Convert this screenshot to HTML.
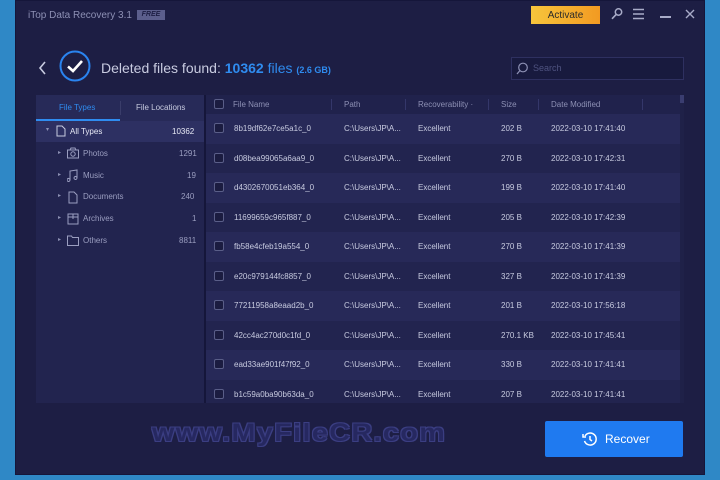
<!DOCTYPE html>
<html><head><meta charset="utf-8"><style>
*{margin:0;padding:0;box-sizing:border-box}
body{width:720px;height:480px;background:#2f88c6;font-family:"Liberation Sans",sans-serif;overflow:hidden;position:relative}
.win{position:absolute;left:15px;top:0;width:690px;height:475px;background:#1d1e44;border:1px solid #15163a}
.a{position:absolute}
.t{color:#c8cbe0;font-size:8px;white-space:nowrap}
.left{position:absolute;left:36px;top:95px;width:168px;height:308px;background:#22244f}
.tbl{position:absolute;left:206px;top:95px;width:478px;height:308px;background:#22244f;overflow:hidden}
.row{position:absolute;left:0;width:474px;height:29.5px}
.cb{position:absolute;width:10px;height:10px;border:1px solid #5a5e88;border-radius:2px;background:#1b1c40}
</style></head><body>
<div class="win"></div>
<div class="a" style="left:28px;top:10px;color:#8d90b4;font-size:10px">iTop Data Recovery 3.1</div>
<div class="a" style="left:137px;top:10px;width:28px;height:10px;background:#5b5e8c;color:#1d1e44;font-size:7px;font-weight:bold;font-style:italic;text-align:center;line-height:10px">FREE</div>
<div class="a" style="left:531px;top:6px;width:69px;height:18px;background:linear-gradient(90deg,#f7c53c,#f29a22);color:#2a2a2a;font-size:10px;display:flex;align-items:center;justify-content:center">Activate</div>
<svg class="a" style="left:610px;top:7px" width="14" height="14" viewBox="0 0 14 14"><circle cx="8.5" cy="5" r="3.2" fill="none" stroke="#a8abc8" stroke-width="1.5"/><path d="M6.3 7.3L2 11.8" stroke="#a8abc8" stroke-width="1.6"/></svg>
<svg class="a" style="left:633px;top:8px" width="12" height="12"><path d="M0 1.5h11M0 6h11M0 10.5h11" stroke="#a8abc8" stroke-width="1.4"/></svg>
<div class="a" style="left:660px;top:16px;width:11px;height:1.5px;background:#a8abc8"></div>
<svg class="a" style="left:685px;top:9px" width="10" height="10"><path d="M1 1L9 9M9 1L1 9" stroke="#a8abc8" stroke-width="1.4"/></svg>
<svg class="a" style="left:38px;top:60px" width="10" height="16"><path d="M7 2L2 8L7 14" fill="none" stroke="#c8cbe0" stroke-width="1.6"/></svg>
<svg class="a" style="left:59px;top:50px" width="32" height="32"><circle cx="16" cy="16" r="14.5" fill="none" stroke="#2a84f0" stroke-width="2"/><path d="M9 16.5L14 21L23 11" fill="none" stroke="#fff" stroke-width="2.6"/></svg>
<div class="a" style="left:101px;top:60px;font-size:14px;color:#c8cbe0">Deleted files found: <b style="color:#2f8cf0">10362</b> <span style="color:#2f8cf0">files</span> <b style="color:#2f8cf0;font-size:9px">(2.6 GB)</b></div>
<div class="a" style="left:511px;top:57px;width:173px;height:23px;background:#181a3e;border:1px solid #2e3060"></div>
<svg class="a" style="left:516px;top:62px" width="13" height="13"><circle cx="7" cy="5.5" r="4.3" fill="none" stroke="#8d90b4" stroke-width="1.2"/><path d="M4 8.5L1 12" stroke="#8d90b4" stroke-width="1.3"/></svg>
<div class="a" style="left:533px;top:63px;font-size:9px;color:#4f5380">Search</div>

<div class="left">
<div class="a" style="left:0;top:0;width:168px;height:26px;background:#272a58"></div>
<div class="a t" style="left:23px;top:8px;color:#2f8cf0">File Types</div>
<div class="a t" style="left:100px;top:8px">File Locations</div>
<div class="a" style="left:84px;top:6px;width:1px;height:14px;background:#3a3d6a"></div>
<div class="a" style="left:0;top:24px;width:84px;height:2px;background:#2f8cf0"></div>
<div class="a" style="left:0;top:26px;width:168px;height:21px;background:#2d3062"></div>
<div class="a t" style="left:10px;top:31px;font-size:6px;color:#8d90b4">▾</div>
<svg class="a" style="left:20px;top:30px" width="10" height="12"><path d="M1 1h5l3 3v7H1z" fill="none" stroke="#c8cbe0" stroke-width="1"/></svg>
<div class="a t" style="left:34px;top:32px;color:#e8eaf6">All Types</div>
<div class="a t" style="left:136px;top:32px;color:#e8eaf6">10362</div>
<div class="a t" style="left:22px;top:54px;font-size:6px;color:#8d90b4">▸</div>
<div class="a t" style="left:47px;top:54px;color:#9b9ec0">Photos</div><div class="a t" style="left:143px;top:54px;color:#9b9ec0">1291</div>
<div class="a t" style="left:22px;top:76px;font-size:6px;color:#8d90b4">▸</div>
<div class="a t" style="left:47px;top:76px;color:#9b9ec0">Music</div><div class="a t" style="left:151px;top:76px;color:#9b9ec0">19</div>
<div class="a t" style="left:22px;top:97px;font-size:6px;color:#8d90b4">▸</div>
<div class="a t" style="left:47px;top:97px;color:#9b9ec0">Documents</div><div class="a t" style="left:145px;top:97px;color:#9b9ec0">240</div>
<div class="a t" style="left:22px;top:119px;font-size:6px;color:#8d90b4">▸</div>
<div class="a t" style="left:47px;top:119px;color:#9b9ec0">Archives</div><div class="a t" style="left:156px;top:119px;color:#9b9ec0">1</div>
<div class="a t" style="left:22px;top:141px;font-size:6px;color:#8d90b4">▸</div>
<div class="a t" style="left:47px;top:141px;color:#9b9ec0">Others</div><div class="a t" style="left:143px;top:141px;color:#9b9ec0">8811</div>
<svg class="a" style="left:31px;top:52px" width="12" height="110" fill="none" stroke="#9b9ec0" stroke-width="1">
<rect x="0.5" y="3" width="11" height="8"/><circle cx="6" cy="7" r="2.2"/><path d="M3 3l1-2h4l1 2"/>
<path d="M3 33V24l7-1v8M3 33a1.5 1.5 0 1 1 0-.1M10 31a1.5 1.5 0 1 1 0-.1"/>
<path d="M2 45h5l3 3v8H2z"/>
<rect x="1" y="67" width="10" height="10"/><path d="M1 70h10M6 67v5"/>
<path d="M0.5 89h4l1 1.5h6v8h-11z"/>
</svg>
</div>

<div class="tbl">
<div class="a" style="left:0;top:0;width:474px;height:19px;background:#20224c"></div>
<div class="cb" style="left:8px;top:4px"></div>
<div class="a t" style="left:27px;top:5px;color:#8d90b4">File Name</div>
<div class="a t" style="left:138px;top:5px;color:#8d90b4">Path</div>
<div class="a t" style="left:212px;top:5px;color:#8d90b4">Recoverability ·</div>
<div class="a t" style="left:295px;top:5px;color:#8d90b4">Size</div>
<div class="a t" style="left:345px;top:5px;color:#8d90b4">Date Modified</div>
<div class="a" style="left:125px;top:4px;width:1px;height:11px;background:#34376a"></div>
<div class="a" style="left:199px;top:4px;width:1px;height:11px;background:#34376a"></div>
<div class="a" style="left:282px;top:4px;width:1px;height:11px;background:#34376a"></div>
<div class="a" style="left:332px;top:4px;width:1px;height:11px;background:#34376a"></div>
<div class="a" style="left:436px;top:4px;width:1px;height:11px;background:#34376a"></div>
<div id="rows"></div>
<div class="a" style="left:474px;top:0;width:4px;height:308px;background:#1f2148"></div>
<div class="a" style="left:474px;top:0;width:4px;height:8px;background:#3a3d70"></div>
</div>
<div class="a" style="left:204px;top:95px;width:2px;height:308px;background:#15163a"></div>

<div class="a" style="left:152px;top:419px;font-size:25px;font-weight:bold;color:#262860;letter-spacing:1.2px;transform:scaleX(1.15);transform-origin:left top;text-shadow:1px 1px 0 #3b3e82,-1px -1px 0 #3b3e82,1px -1px 0 #3b3e82,-1px 1px 0 #3b3e82">www.MyFileCR.com</div>
<div class="a" style="left:545px;top:421px;width:138px;height:36px;background:#1f7af0;border-radius:2px"></div>
<svg class="a" style="left:582px;top:431px" width="16" height="16" fill="none" stroke="#fff" stroke-width="1.5"><path d="M3 5A6 6 0 1 1 2.5 10"/><path d="M1 3v3h3"/><path d="M8 5v3.5l2 1.5"/></svg>
<div class="a" style="left:605px;top:432px;font-size:12px;color:#fff">Recover</div>

<script>
var d=[["8b19df62e7ce5a1c_0","202 B","2022-03-10 17:41:40"],["d08bea99065a6aa9_0","270 B","2022-03-10 17:42:31"],["d4302670051eb364_0","199 B","2022-03-10 17:41:40"],["11699659c965f887_0","205 B","2022-03-10 17:42:39"],["fb58e4cfeb19a554_0","270 B","2022-03-10 17:41:39"],["e20c979144fc8857_0","327 B","2022-03-10 17:41:39"],["77211958a8eaad2b_0","201 B","2022-03-10 17:56:18"],["42cc4ac270d0c1fd_0","270.1 KB","2022-03-10 17:45:41"],["ead33ae901f47f92_0","330 B","2022-03-10 17:41:41"],["b1c59a0ba90b63da_0","207 B","2022-03-10 17:41:41"]];
var h="";d.forEach(function(r,i){var y=19+i*29.5;h+='<div class="row" style="top:'+y+'px;background:'+(i%2?'#22244f':'#272958')+'"><div class="cb" style="left:8px;top:9px"></div><div class="a t" style="left:28px;top:10px">'+r[0]+'</div><div class="a t" style="left:138px;top:10px">C:\\Users\\JP\\A...</div><div class="a t" style="left:212px;top:10px">Excellent</div><div class="a t" style="left:295px;top:10px">'+r[1]+'</div><div class="a t" style="left:345px;top:10px">'+r[2]+'</div></div>';});
document.getElementById("rows").innerHTML=h;
</script>
</body></html>
